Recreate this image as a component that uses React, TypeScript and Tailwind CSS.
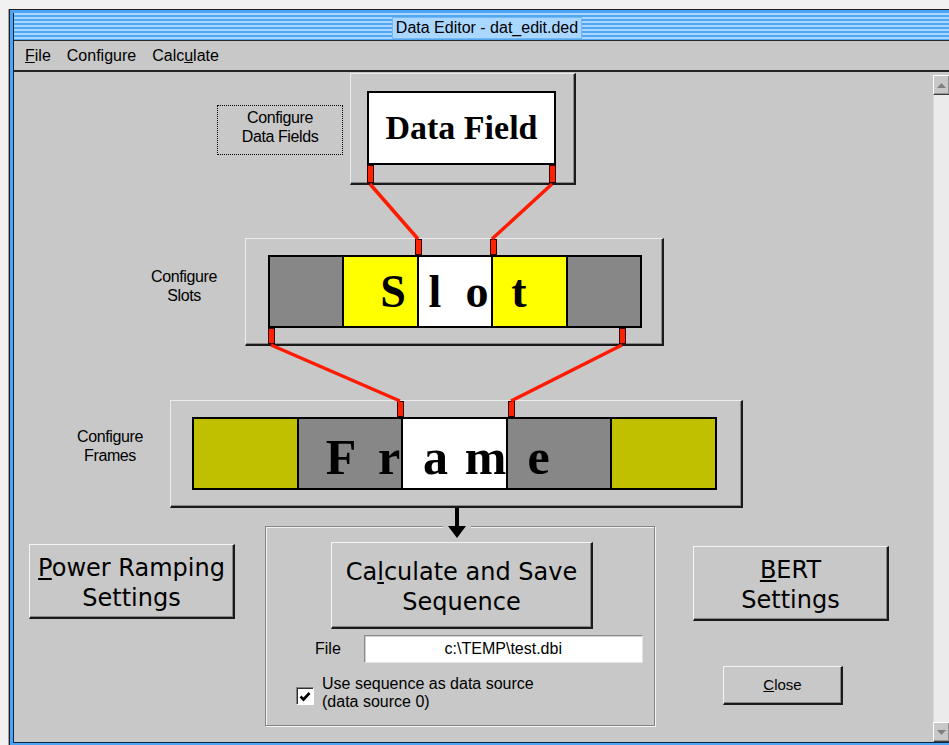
import type { ReactNode } from 'react'

const ui = "font-['Liberation_Sans',Arial,sans-serif]"
const big = "font-['DejaVu_Sans',sans-serif] text-[24px] leading-[30px] pt-[4px]"
const serif = "font-['Liberation_Serif','Times_New_Roman',serif] font-bold"
const label = 'text-[16px] leading-[19px] tracking-[-0.4px]'

// Win95 style raised button
function WinButton({ className = '', children }: { className?: string; children: ReactNode }) {
  return (
    <button
      type="button"
      className={`flex shrink-0 flex-col items-center justify-center border-t border-l border-t-[#f4f4f4] border-l-[#f4f4f4] border-r-2 border-b-2 border-r-[#1a1a1a] border-b-[#1a1a1a] bg-[#c8c8c8] text-black shadow-[inset_-1px_-1px_0_#868686] ${className}`}
    >
      {children}
    </button>
  )
}

// raised container around a diagram block
function Panel({ className = '', children }: { className?: string; children: ReactNode }) {
  return (
    <div
      className={`shrink-0 border-t border-l border-t-[#ececec] border-l-[#ececec] border-r-2 border-b-2 border-r-[#1a1a1a] border-b-[#1a1a1a] shadow-[inset_-1px_-1px_0_#8a8a8a] ${className}`}
    >
      {children}
    </div>
  )
}

function Pin() {
  return <div className="h-full w-[7px] shrink-0 border border-[#300000] bg-[#ff2200]" />
}

function ScrollArrow({ up }: { up?: boolean }) {
  return (
    <div className="flex h-[20px] shrink-0 items-center justify-center border-t border-l border-t-white border-l-white border-r border-b border-r-[#404040] border-b-[#404040] bg-[#c8c8c8] shadow-[inset_-1px_-1px_0_#909090]">
      <svg width="9" height="5" viewBox="0 0 9 5">
        <path d={up ? 'M4.5 0 L9 5 L0 5 Z' : 'M0 0 L9 0 L4.5 5 Z'} fill="#808080" />
      </svg>
    </div>
  )
}

export default function App() {
  return (
    <div className={`h-[745px] w-[949px] overflow-hidden bg-[#f1f1f1] pt-[9px] pl-[8px] text-black ${ui}`}>
      <div className="w-[956px] border-l border-l-[#a3a3a3]">
        <div className="border-t border-l border-[#1d1d1d]">
          <div className="border-[3px] border-[#4ba4f4]">
            <div className="flex w-[947px] flex-col border-l border-b border-[#0d2447]">
              {/* 타이틀 바 */}
              <div className="flex h-[27px] items-end justify-center bg-[repeating-linear-gradient(to_bottom,#aad6ff_0px,#aad6ff_2px,#4fa6f3_2px,#4fa6f3_4px)] pb-[1px]">
                <div className="flex h-[22px] items-center border border-[#78b8ec] bg-[#a9d7ff] px-[3px] text-[16px] leading-none">
                  Data Editor - dat_edit.ded
                </div>
              </div>
              <div className="h-px bg-[#2a2a2a]" />

              {/* 메뉴 */}
              <div className="flex h-[29px] items-center gap-[16px] bg-[#c8c8c8] pl-[11px] text-[16px]">
                <span>
                  <span className="underline">F</span>ile
                </span>
                <span>Configure</span>
                <span>
                  Calc<span className="underline">u</span>late
                </span>
              </div>
              <div className="h-[2px] bg-[#222]" />

              <div className="flex h-[670px] bg-[#c8c8c8]">
                {/* 작업 영역 */}
                <div className="relative flex w-[919px] shrink-0 flex-col">
                  {/* row 1: data field */}
                  <div className="mt-[1px] flex h-[112px] items-start">
                    <div
                      className={`mt-[32px] ml-[203px] flex h-[50px] w-[126px] flex-col items-center justify-center border border-dotted border-black pb-[7px] ${label}`}
                    >
                      <span>Configure</span>
                      <span>Data Fields</span>
                    </div>
                    <Panel className="ml-[7px] flex h-[112px] w-[226px] flex-col pt-[17px] pl-[16px]">
                      <div
                        className={`flex h-[74px] w-[189px] items-center justify-center border-2 border-black bg-white text-[34px] leading-none ${serif}`}
                      >
                        Data Field
                      </div>
                      <div className="flex h-[18px] w-[189px] justify-between">
                        <Pin />
                        <Pin />
                      </div>
                    </Panel>
                  </div>

                  {/* row 2: slot */}
                  <div className="mt-[53px] flex h-[108px] items-start">
                    <div className={`mt-[29px] ml-[130px] flex w-[80px] flex-col items-center ${label}`}>
                      <span>Configure</span>
                      <span>Slots</span>
                    </div>
                    <Panel className="ml-[21px] flex h-[108px] w-[419px] flex-col pl-[22px]">
                      <div className="flex h-[16px] gap-[68px] pl-[147px]">
                        <Pin />
                        <Pin />
                      </div>
                      <div className="relative grid h-[73px] w-[374px] grid-cols-5 gap-[2px] bg-black p-[2px]">
                        <div className="bg-[#878787]" />
                        <div className="bg-[#ffff00]" />
                        <div className="bg-white" />
                        <div className="bg-[#ffff00]" />
                        <div className="bg-[#878787]" />
                        <div className={`absolute inset-0 flex items-center pl-[104px] text-[46px] leading-none ${serif}`}>
                          <span className="w-[42px] text-center">S</span>
                          <span className="w-[42px] text-center">l</span>
                          <span className="w-[42px] text-center">o</span>
                          <span className="w-[42px] text-center">t</span>
                        </div>
                      </div>
                      <div className="flex h-[16px] gap-[344px]">
                        <Pin />
                        <Pin />
                      </div>
                    </Panel>
                  </div>

                  {/* row 3: frame */}
                  <div className="mt-[54px] flex h-[108px] items-start">
                    <div className={`mt-[27px] ml-[56px] flex w-[80px] flex-col items-center ${label}`}>
                      <span>Configure</span>
                      <span>Frames</span>
                    </div>
                    <Panel className="ml-[20px] flex h-[108px] w-[573px] flex-col pl-[21px]">
                      <div className="flex h-[16px] gap-[104px] pl-[205px]">
                        <Pin />
                        <Pin />
                      </div>
                      <div className="relative grid h-[73px] w-[525px] grid-cols-5 gap-[2px] bg-black p-[2px]">
                        <div className="bg-[#c0c000]" />
                        <div className="bg-[#878787]" />
                        <div className="bg-white" />
                        <div className="bg-[#878787]" />
                        <div className="bg-[#c0c000]" />
                        <div className={`absolute inset-0 flex items-center pt-[6px] pl-[124px] text-[50px] leading-none ${serif}`}>
                          <span className="w-[50px] text-center">F</span>
                          <span className="w-[46px] text-center">r</span>
                          <span className="w-[47px] text-center">a</span>
                          <span className="w-[53px] text-center">m</span>
                          <span className="w-[53px] text-center">e</span>
                        </div>
                      </div>
                    </Panel>
                  </div>

                  {/* row 4: buttons + sequence group */}
                  <div className="mt-[18px] flex items-start">
                    <WinButton className={`mt-[18px] ml-[15px] h-[75px] w-[206px] ${big}`}>
                      <span>
                        <span className="underline">P</span>ower Ramping
                      </span>
                      <span>Settings</span>
                    </WinButton>

                    <div className="relative ml-[30px] flex h-[200px] w-[390px] shrink-0 flex-col border border-[#858585] shadow-[inset_1px_1px_0_#f4f4f4,1px_1px_0_#f4f4f4]">
                      <svg
                        className="absolute top-[-19px] left-[177px] bg-[#c8c8c8]"
                        width="28"
                        height="31"
                        viewBox="0 0 28 31"
                      >
                        <rect x="12" y="0" width="4" height="20" fill="#000" />
                        <path d="M5 18 L23 18 L14 30 Z" fill="#000" />
                      </svg>

                      <WinButton className={`mt-[15px] ml-[65px] h-[87px] w-[262px] ${big}`}>
                        <span>
                          Ca<span className="underline">l</span>culate and Save
                        </span>
                        <span>Sequence</span>
                      </WinButton>

                      <div className="mt-[6px] flex h-[28px] items-center pl-[49px] text-[16px]">
                        <span>File</span>
                        <div className="ml-[23px] flex h-[28px] w-[279px] items-center justify-center border-t border-l border-t-[#8a8a8a] border-l-[#8a8a8a] border-r border-b border-r-[#e4e4e4] border-b-[#e4e4e4] bg-white shadow-[inset_1px_1px_0_#d0d0d0]">
                          c:\TEMP\test.dbi
                        </div>
                      </div>

                      <div className="mt-[12px] flex items-start pl-[30px] text-[16px] leading-[18px]">
                        <div className="mt-[12px] flex h-[18px] w-[18px] items-center justify-center border-t border-l border-t-[#808080] border-l-[#808080] border-r border-b border-r-white border-b-white bg-white shadow-[inset_1px_1px_0_#303030]">
                          <svg width="12" height="11" viewBox="0 0 12 11">
                            <path d="M1.5 5.5 L4.5 8.5 L10.5 2" stroke="#000" strokeWidth="2.6" fill="none" />
                          </svg>
                        </div>
                        <div className="ml-[8px] flex flex-col">
                          <span>Use sequence as data source</span>
                          <span>(data source 0)</span>
                        </div>
                      </div>
                    </div>

                    <div className="mt-[20px] ml-[38px] flex flex-col">
                      <WinButton className={`h-[75px] w-[196px] ${big}`}>
                        <span>
                          <span className="underline">B</span>ERT
                        </span>
                        <span>Settings</span>
                      </WinButton>
                      <WinButton className="mt-[45px] ml-[30px] h-[39px] w-[120px] text-[15px]">
                        <span>
                          <span className="underline">C</span>lose
                        </span>
                      </WinButton>
                    </div>
                  </div>

                  {/* 빨간 연결선 */}
                  <svg className="pointer-events-none absolute top-0 left-0" width="919" height="670">
                    <g stroke="#ff1a00" strokeWidth="3.5" strokeLinecap="butt">
                      <line x1="356" y1="112" x2="404" y2="167" />
                      <line x1="538" y1="112" x2="478" y2="167" />
                      <line x1="257" y1="273" x2="386" y2="329" />
                      <line x1="608" y1="273" x2="497" y2="329" />
                    </g>
                  </svg>
                </div>

                {/* 스크롤바 */}
                <div className="flex w-[17px] shrink-0 flex-col pt-[3px]">
                  <ScrollArrow up />
                  <div className="flex-1 border-l border-l-[#d8d8d8] bg-[#ebebeb]" />
                  <ScrollArrow />
                </div>
              </div>
            </div>
          </div>
        </div>
      </div>
    </div>
  )
}
